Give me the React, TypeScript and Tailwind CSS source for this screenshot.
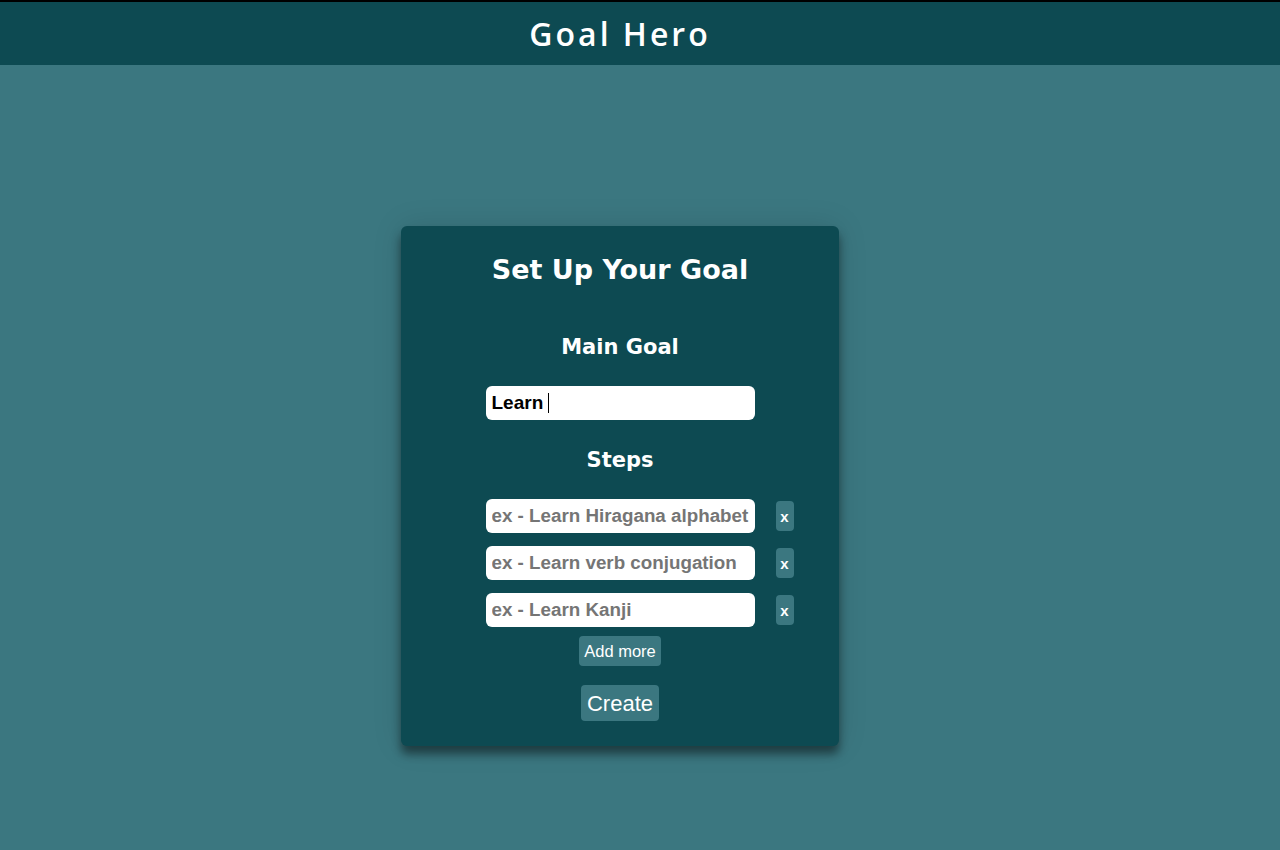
import React from 'react';

const STEPS = ['ex - Learn Hiragana alphabet', 'ex - Learn verb conjugation', 'ex - Learn Kanji'];

export default function App() {
  return (
    <div className="min-h-[850px] bg-[#3b7780] font-['Liberation_Sans',Arial,sans-serif]">
      {/* Header */}
      <header className="h-[65px] bg-[#0d4a52] border-t-2 border-black flex items-center justify-center pr-[40px]">
        <h1 className="font-['Open_Sans',sans-serif] text-[32px] font-semibold tracking-[3px] text-white">Goal Hero</h1>
      </header>

      {/* Goal card */}
      <div className="flex justify-center pt-[161px] pr-[40px]">
        <div className="w-[438px] bg-[#0d4a52] rounded-md shadow-[0_8px_10px_rgba(0,0,0,0.45),0_0_30px_rgba(0,0,0,0.12)] flex flex-col items-center pt-[26px] pb-[25px]">
          <h2 className="h-[36px] leading-[36px] font-['DejaVu_Sans',sans-serif] text-[27px] font-bold text-white">
            Set Up Your Goal
          </h2>

          <h3 className="mt-[45px] h-[28px] leading-[28px] font-['DejaVu_Sans',sans-serif] text-[21px] font-bold text-white">
            Main Goal
          </h3>
          <div className="mt-[25px] w-[269px] h-[34px] bg-white rounded-md flex items-center px-[6px] text-[19px] font-bold text-black">
            Learn
            <span className="ml-[5px] w-px h-[20px] bg-black" />
          </div>

          <h3 className="mt-[26px] h-[28px] leading-[28px] font-['DejaVu_Sans',sans-serif] text-[21px] font-bold text-white">
            Steps
          </h3>
          <div className="mt-[25px] flex flex-col gap-[13px]">
            {STEPS.map((step) => (
              <div key={step} className="flex items-center gap-[21px]">
                <span className="w-[18px]" />
                <input
                  placeholder={step}
                  className="w-[269px] h-[34px] bg-white rounded-md pl-[6px] pr-[2px] text-[18.8px] font-bold text-black placeholder:text-[#757575] outline-none"
                />
                <button className="w-[18px] h-[30px] bg-[#3b7780] rounded-sm text-white text-[15px] font-bold leading-none">
                  x
                </button>
              </div>
            ))}
          </div>

          <button className="mt-[9px] h-[30px] px-[5px] bg-[#3b7780] rounded-sm text-white text-[16.5px]">
            Add more
          </button>
          <button className="mt-[19px] h-[36px] px-[6px] bg-[#3b7780] rounded-sm text-white text-[22px]">
            Create
          </button>
        </div>
      </div>
    </div>
  );
}
